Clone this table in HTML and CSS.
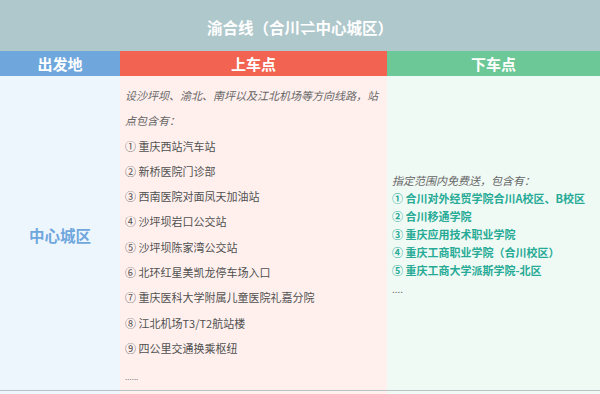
FILE: index.html
```html
<!DOCTYPE html>
<html lang="zh">
<head>
<meta charset="utf-8">
<link rel="stylesheet" href="styles.css">
</head>
<body>
<div class="table">
  <div class="title">渝合线（合川⇌中心城区）</div>
  <div class="row heads">
    <div class="h h-from">出发地</div>
    <div class="h h-up">上车点</div>
    <div class="h h-down">下车点</div>
  </div>
  <div class="row body">
    <div class="cell c-from"><span class="city">中心城区</span></div>
    <div class="cell c-up">
      <p class="intro">设沙坪坝、渝北、南坪以及江北机场等方向线路，站点包含有：</p>
      <p class="item">① 重庆西站汽车站</p>
      <p class="item">② 新桥医院门诊部</p>
      <p class="item">③ 西南医院对面凤天加油站</p>
      <p class="item">④ 沙坪坝岩口公交站</p>
      <p class="item">⑤ 沙坪坝陈家湾公交站</p>
      <p class="item">⑥ 北环红星美凯龙停车场入口</p>
      <p class="item">⑦ 重庆医科大学附属儿童医院礼嘉分院</p>
      <p class="item">⑧ 江北机场T3/T2航站楼</p>
      <p class="item">⑨ 四公里交通换乘枢纽</p>
      <p class="more">......</p>
    </div>
    <div class="cell c-down">
      <div class="down-list">
        <p class="intro2">指定范围内免费送，包含有：</p>
        <p class="g">① 合川对外经贸学院合川A校区、B校区</p>
        <p class="g">② 合川移通学院</p>
        <p class="g">③ 重庆应用技术职业学院</p>
        <p class="g">④ 重庆工商职业学院（合川校区）</p>
        <p class="g">⑤ 重庆工商大学派斯学院-北区</p>
        <p class="dots">....</p>
      </div>
    </div>
  </div>
  <div class="row tail">
    <div class="t1"></div><div class="t2"></div><div class="t3"></div>
  </div>
</div>
</body>
</html>
```
FILE: styles.css
```css
* { box-sizing: border-box; }
html, body { margin: 0; padding: 0; }
body {
  width: 600px;
  height: 394px;
  overflow: hidden;
  background: #ffffff;
  font-family: "Noto Sans CJK SC", "Noto Sans", sans-serif;
}
p { margin: 0; }
.table { width: 600px; }
.title {
  height: 51px;
  padding-top: 3px;
  background: #afc8cc;
  color: #ffffff;
  font-weight: 700;
  font-size: 15.5px;
  display: flex;
  align-items: center;
  justify-content: center;
}
.row {
  display: grid;
  grid-template-columns: 120px 267px 213px;
}
.heads { height: 25px; }
.h {
  color: #ffffff;
  font-weight: 700;
  font-size: 15px;
  display: flex;
  align-items: center;
  justify-content: center;
}
.h-from { background: #6fa7dd; }
.h-up { background: #f26451; }
.h-down { background: #6cc897; }
.body {
  height: 315px;
  border-bottom: 1px solid #b7c2c6;
}
.c-from {
  background: #eef6fd;
  display: flex;
  align-items: center;
  justify-content: center;
  padding-top: 4px;
}
.city {
  color: #6fa7dd;
  font-weight: 700;
  font-size: 15.5px;
}
.c-up {
  background: #fff0ee;
  padding: 7px 4px 0 5px;
  font-size: 11px;
  color: #505050;
}
.intro {
  font-style: italic;
  line-height: 25.3px;
  color: #666666;
}
.item { line-height: 25.3px; }
.more {
  line-height: 25px;
  margin-top: 3px;
  font-size: 8px;
  color: #777777;
}
.c-down {
  background: #f0faf5;
  display: flex;
  align-items: center;
  padding: 4px 0 0 5px;
  font-size: 11px;
}
.intro2 {
  font-style: italic;
  color: #666666;
  line-height: 18px;
}
.g {
  color: #27aa96;
  font-weight: 700;
  line-height: 18px;
}
.dots {
  color: #666666;
  line-height: 20px;
  font-size: 10px;
}
.tail { height: 3px; }
.t1 { background: #eef6fd; }
.t2 { background: #fff0ee; }
.t3 { background: #f0faf5; }
```
